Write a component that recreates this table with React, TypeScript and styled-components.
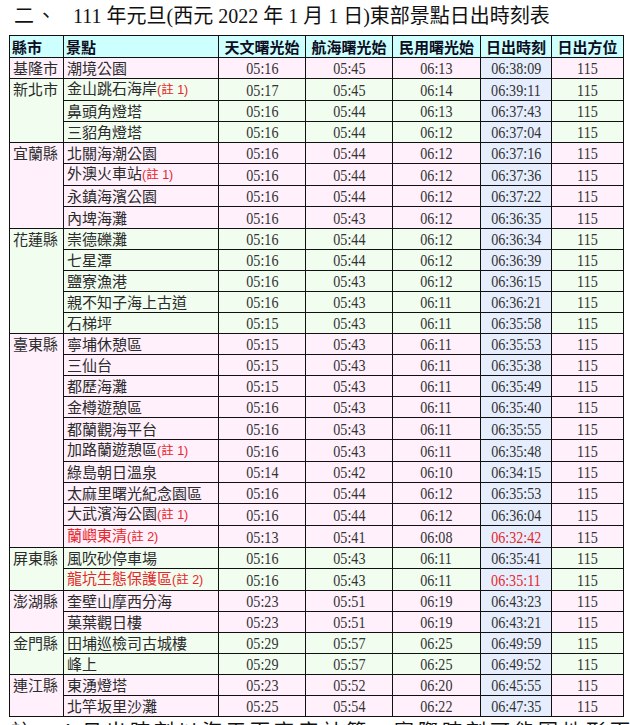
import React from "react";
import styled, { createGlobalStyle } from "styled-components";

const GlobalStyle = createGlobalStyle`
  html, body { margin: 0; padding: 0; background: #ffffff; }
  body { font-family: "Liberation Sans", "Noto Sans CJK TC", sans-serif; overflow: hidden; }
`;

type Tone = "pink" | "green";

const toneBg: Record<Tone, string> = {
  pink: "#fff0fc",
  green: "#f0fdef",
};

const Page = styled.div`
  padding: 5px 7px 0 9px;
  width: 614px;
  overflow: hidden;
`;

const Title = styled.h1`
  margin: 0 0 7px 5px;
  height: 23px;
  font-family: "Liberation Serif", "Noto Sans CJK TC", serif;
  font-weight: normal;
  font-size: 20px;
  line-height: 23px;
  color: #111;
  white-space: nowrap;
  display: flex;
  align-items: baseline;
`;

const TitleLead = styled.span`
  width: 59px;
  letter-spacing: 2px;
`;

const TitleMain = styled.span`
  letter-spacing: 0;
`;

const Table = styled.table`
  border-collapse: collapse;
  table-layout: fixed;
  width: 614px;
  border: 1.5px solid #111;
`;

const HeadCell = styled.th<{ $align?: "left" | "center" }>`
  background: #ccfffe;
  border: 1px solid #111;
  height: 21px;
  padding: 0 2px;
  font-family: "Liberation Sans", "Noto Sans CJK TC", sans-serif;
  font-size: 15px;
  font-weight: bold;
  color: #0d0d1e;
  text-align: ${(p) => p.$align ?? "center"};
  white-space: nowrap;
  vertical-align: middle;
`;

const CountyCell = styled.td<{ $tone: Tone }>`
  background: ${(p) => toneBg[p.$tone]};
  border: 1px solid #111;
  padding: 1px 2px 0 3px;
  vertical-align: top;
  font-size: 15px;
  line-height: 19px;
  color: #2b2b2b;
  white-space: nowrap;
`;

const PlaceCell = styled.td<{ $tone: Tone; $red?: boolean }>`
  background: ${(p) => toneBg[p.$tone]};
  border: 1px solid #111;
  height: 20.1px;
  padding: 0 2px 0 3px;
  font-size: 15px;
  line-height: 19px;
  color: ${(p) => (p.$red ? "#e8262a" : "#2b2b2b")};
  white-space: nowrap;
  vertical-align: bottom;
`;

const Note = styled.span`
  font-size: 12.5px;
  color: #e8262a;
`;

const NumCell = styled.td<{ $bg: string; $red?: boolean }>`
  background: ${(p) => p.$bg};
  border: 1px solid #111;
  padding: 0;
  text-align: center;
  vertical-align: bottom;
  line-height: 19px;
  color: ${(p) => (p.$red ? "#e8262a" : "#333")};
  white-space: nowrap;
`;

const Num = styled.span`
  display: inline-block;
  font-family: "Liberation Serif", serif;
  font-size: 17px;
  transform: scaleX(0.83);
`;

const Footer = styled.p`
  margin: 3px 0 0 2px;
  font-family: "Liberation Serif", "Noto Sans CJK TC", serif;
  font-size: 20px;
  line-height: 24px;
  color: #111;
  white-space: nowrap;
  letter-spacing: 4px;
`;

type Spot = {
  name: string;
  note?: string;
  red?: boolean;
  a: string;
  n: string;
  c: string;
  rise: string;
  riseRed?: boolean;
};

type Group = { county: string; tone: Tone; spots: Spot[] };

const data: Group[] = [
  {
    county: "基隆市",
    tone: "pink",
    spots: [{ name: "潮境公園", a: "05:16", n: "05:45", c: "06:13", rise: "06:38:09" }],
  },
  {
    county: "新北市",
    tone: "green",
    spots: [
      { name: "金山跳石海岸", note: "(註 1)", a: "05:17", n: "05:45", c: "06:14", rise: "06:39:11" },
      { name: "鼻頭角燈塔", a: "05:16", n: "05:44", c: "06:13", rise: "06:37:43" },
      { name: "三貂角燈塔", a: "05:16", n: "05:44", c: "06:12", rise: "06:37:04" },
    ],
  },
  {
    county: "宜蘭縣",
    tone: "pink",
    spots: [
      { name: "北關海潮公園", a: "05:16", n: "05:44", c: "06:12", rise: "06:37:16" },
      { name: "外澳火車站", note: "(註 1)", a: "05:16", n: "05:44", c: "06:12", rise: "06:37:36" },
      { name: "永鎮海濱公園", a: "05:16", n: "05:44", c: "06:12", rise: "06:37:22" },
      { name: "內埤海灘", a: "05:16", n: "05:43", c: "06:12", rise: "06:36:35" },
    ],
  },
  {
    county: "花蓮縣",
    tone: "green",
    spots: [
      { name: "崇德礫灘", a: "05:16", n: "05:44", c: "06:12", rise: "06:36:34" },
      { name: "七星潭", a: "05:16", n: "05:44", c: "06:12", rise: "06:36:39" },
      { name: "鹽寮漁港", a: "05:16", n: "05:43", c: "06:12", rise: "06:36:15" },
      { name: "親不知子海上古道", a: "05:16", n: "05:43", c: "06:11", rise: "06:36:21" },
      { name: "石梯坪", a: "05:15", n: "05:43", c: "06:11", rise: "06:35:58" },
    ],
  },
  {
    county: "臺東縣",
    tone: "pink",
    spots: [
      { name: "寧埔休憩區", a: "05:15", n: "05:43", c: "06:11", rise: "06:35:53" },
      { name: "三仙台", a: "05:15", n: "05:43", c: "06:11", rise: "06:35:38" },
      { name: "都歷海灘", a: "05:15", n: "05:43", c: "06:11", rise: "06:35:49" },
      { name: "金樽遊憩區", a: "05:16", n: "05:43", c: "06:11", rise: "06:35:40" },
      { name: "都蘭觀海平台", a: "05:16", n: "05:43", c: "06:11", rise: "06:35:55" },
      { name: "加路蘭遊憩區", note: "(註 1)", a: "05:16", n: "05:43", c: "06:11", rise: "06:35:48" },
      { name: "綠島朝日溫泉", a: "05:14", n: "05:42", c: "06:10", rise: "06:34:15" },
      { name: "太麻里曙光紀念園區", a: "05:16", n: "05:44", c: "06:12", rise: "06:35:53" },
      { name: "大武濱海公園", note: "(註 1)", a: "05:16", n: "05:44", c: "06:12", rise: "06:36:04" },
      { name: "蘭嶼東清", note: "(註 2)", red: true, a: "05:13", n: "05:41", c: "06:08", rise: "06:32:42", riseRed: true },
    ],
  },
  {
    county: "屏東縣",
    tone: "green",
    spots: [
      { name: "風吹砂停車場", a: "05:16", n: "05:43", c: "06:11", rise: "06:35:41" },
      { name: "龍坑生態保護區", note: "(註 2)", red: true, a: "05:16", n: "05:43", c: "06:11", rise: "06:35:11", riseRed: true },
    ],
  },
  {
    county: "澎湖縣",
    tone: "pink",
    spots: [
      { name: "奎壁山摩西分海", a: "05:23", n: "05:51", c: "06:19", rise: "06:43:23" },
      { name: "菓葉觀日樓", a: "05:23", n: "05:51", c: "06:19", rise: "06:43:21" },
    ],
  },
  {
    county: "金門縣",
    tone: "green",
    spots: [
      { name: "田埔巡檢司古城樓", a: "05:29", n: "05:57", c: "06:25", rise: "06:49:59" },
      { name: "峰上", a: "05:29", n: "05:57", c: "06:25", rise: "06:49:52" },
    ],
  },
  {
    county: "連江縣",
    tone: "pink",
    spots: [
      { name: "東湧燈塔", a: "05:23", n: "05:52", c: "06:20", rise: "06:45:55" },
      { name: "北竿坂里沙灘", a: "05:25", n: "05:54", c: "06:22", rise: "06:47:35" },
    ],
  },
];

const widths = [54, 155, 87, 87, 88, 71, 72];
const riseBg = "#e6eefd";

export default function App() {
  return (
    <>
      <GlobalStyle />
      <Page>
        <Title>
          <TitleLead>二、</TitleLead>
          <TitleMain>111 年元旦(西元 2022 年 1 月 1 日)東部景點日出時刻表</TitleMain>
        </Title>
        <Table>
          <colgroup>
            {widths.map((w, i) => (
              <col key={i} style={{ width: w }} />
            ))}
          </colgroup>
          <thead>
            <tr>
              <HeadCell $align="left">縣市</HeadCell>
              <HeadCell $align="left">景點</HeadCell>
              <HeadCell>天文曙光始</HeadCell>
              <HeadCell>航海曙光始</HeadCell>
              <HeadCell>民用曙光始</HeadCell>
              <HeadCell>日出時刻</HeadCell>
              <HeadCell>日出方位</HeadCell>
            </tr>
          </thead>
          <tbody>
            {data.map((g) =>
              g.spots.map((s, i) => {
                const bg = toneBg[g.tone];
                return (
                  <tr key={g.county + s.name}>
                    {i === 0 && (
                      <CountyCell $tone={g.tone} rowSpan={g.spots.length}>
                        {g.county}
                      </CountyCell>
                    )}
                    <PlaceCell $tone={g.tone} $red={s.red}>
                      {s.name}
                      {s.note && <Note>{s.note}</Note>}
                    </PlaceCell>
                    <NumCell $bg={bg}>
                      <Num>{s.a}</Num>
                    </NumCell>
                    <NumCell $bg={bg}>
                      <Num>{s.n}</Num>
                    </NumCell>
                    <NumCell $bg={bg}>
                      <Num>{s.c}</Num>
                    </NumCell>
                    <NumCell $bg={riseBg} $red={s.riseRed}>
                      <Num>{s.rise}</Num>
                    </NumCell>
                    <NumCell $bg={bg}>
                      <Num>115</Num>
                    </NumCell>
                  </tr>
                );
              })
            )}
          </tbody>
        </Table>
        <Footer>註 1：日出時刻以海平面高度計算，實際時刻可能因地形而不同。</Footer>
      </Page>
    </>
  );
}
